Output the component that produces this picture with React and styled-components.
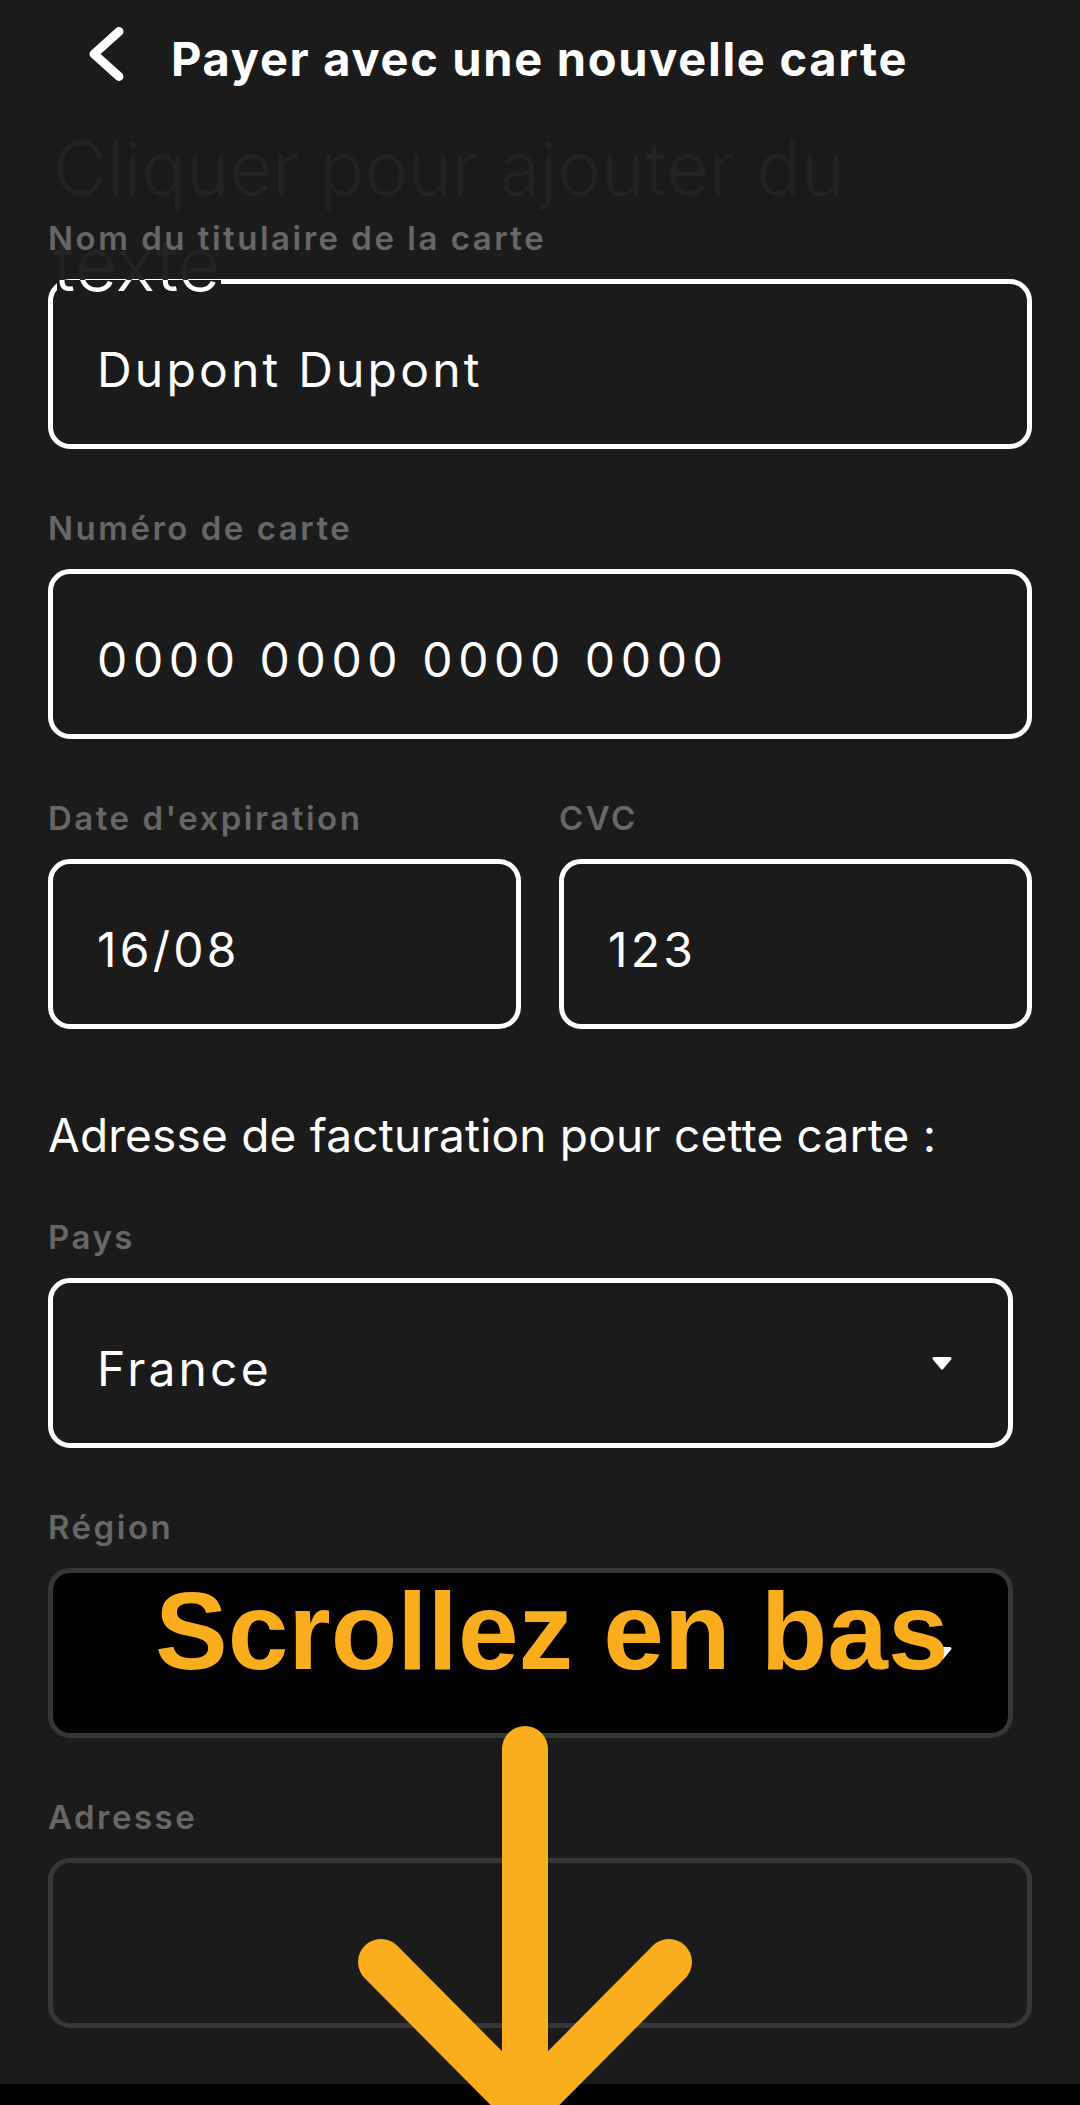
import React from "react";
import styled, { createGlobalStyle } from "styled-components";

const Global = createGlobalStyle`
  html, body { margin: 0; padding: 0; background: #1b1b1b; }
  body { font-family: Inter, "Noto Sans", sans-serif; }
`;

const Screen = styled.div`
  position: relative;
  width: 1080px;
  min-height: 2105px;
  background: #1b1b1b;
  display: flex;
  flex-direction: column;
  overflow: hidden;
  font-family: Inter, "Noto Sans", sans-serif;
  color: #ffffff;
`;

const Header = styled.header`
  height: 118px;
  display: flex;
  align-items: center;
  padding-left: 86px;
  box-sizing: border-box;
`;

const BackButton = styled.button`
  background: none;
  border: 0;
  padding: 0;
  margin: 0 0 11px 0;
  width: 44px;
  height: 60px;
  display: flex;
  cursor: pointer;
`;

const Title = styled.h1`
  margin: 0 0 0 41px;
  font-size: 47px;
  line-height: 56px;
  font-weight: 700;
  color: #ffffff;
  letter-spacing: 1.7px;
`;

const Ghost = styled.div`
  position: absolute;
  top: 120px;
  left: 53px;
  z-index: 1;
  pointer-events: none;
  font-size: 74px;
  line-height: 96px;
  font-weight: 300;
  color: #232323;
  white-space: nowrap;
`;

const GhostLine = styled.div``;

const GhostTail = styled.span`
  position: relative;
  display: inline-block;
  height: 96px;
  color: #232323;
`;

const GhostSlice = styled.span`
  position: absolute;
  left: 4px;
  right: 0;
  top: 64px;
  height: 12px;
  overflow: hidden;
  background: #1b1b1b;
`;

const GhostSliceText = styled.span`
  display: block;
  margin-top: -64px;
  margin-left: -4px;
  line-height: 96px;
  color: #ffffff;
`;

const Form = styled.main`
  margin-top: 101px;
  padding: 0 48px;
  display: flex;
  flex-direction: column;
  gap: 60px;
`;

const Field = styled.div`
  display: flex;
  flex-direction: column;
  gap: 22px;
`;

const Label = styled.label`
  position: relative;
  z-index: 2;
  font-size: 33px;
  line-height: 38px;
  font-weight: 600;
  letter-spacing: 2.5px;
  color: #676767;
`;

const Box = styled.div`
  position: relative;
  height: 170px;
  box-sizing: border-box;
  width: ${(p) => (p.$narrow ? "965px" : "100%")};
  border: 5px solid ${(p) => (p.$muted ? "#363636" : "#ffffff")};
  border-radius: 22px;
  background: ${(p) => (p.$dark ? "#000000" : "#1b1b1b")};
  display: flex;
  align-items: center;
  justify-content: space-between;
  padding: 10px 55px 0 44px;
  font-size: 48px;
  font-weight: 400;
  letter-spacing: ${(p) => (p.$digits ? "5.6px" : "3.2px")};
  color: #ffffff;
`;

const Caret = styled.svg`
  width: 22px;
  height: 14px;
  margin-top: -10px;
  flex: none;
`;

const Row = styled.div`
  display: grid;
  grid-template-columns: 1fr 1fr;
  gap: 38px;
`;

const Heading = styled.h2`
  margin: 18px 0 -5px;
  font-size: 46px;
  line-height: 56px;
  font-weight: 400;
  letter-spacing: 0.2px;
  color: #ffffff;
`;

const BottomBar = styled.div`
  margin-top: auto;
  height: 21px;
  background: #000000;
`;

const Callout = styled.div`
  position: absolute;
  top: 1577px;
  left: 155px;
  z-index: 3;
  font-family: "Liberation Sans", Arial, sans-serif;
  font-weight: 700;
  font-size: 109px;
  line-height: 108px;
  color: #faae1e;
  white-space: nowrap;
`;

const ArrowSvg = styled.svg`
  position: absolute;
  left: 340px;
  top: 1700px;
  width: 370px;
  height: 405px;
  z-index: 3;
  overflow: visible;
`;

function SelectCaret() {
  return (
    <Caret viewBox="0 0 22 14">
      <path
        d="M3 2.5 H19 L11 12 Z"
        fill="#fff"
        stroke="#fff"
        strokeWidth="3"
        strokeLinejoin="round"
      />
    </Caret>
  );
}

export default function App() {
  return (
    <Screen>
      <Global />
      <Header>
        <BackButton aria-label="Retour">
          <svg width="44" height="60" viewBox="0 0 44 60">
            <polyline
              points="33,7.5 8,30 33,52.5"
              fill="none"
              stroke="#fff"
              strokeWidth="9"
              strokeLinecap="round"
              strokeLinejoin="round"
            />
          </svg>
        </BackButton>
        <Title>Payer avec une nouvelle carte</Title>
      </Header>

      <Ghost>
        <GhostLine>Cliquer pour ajouter du</GhostLine>
        <GhostTail>
          texte
          <GhostSlice aria-hidden="true">
            <GhostSliceText>texte</GhostSliceText>
          </GhostSlice>
        </GhostTail>
      </Ghost>

      <Form>
        <Field>
          <Label>Nom du titulaire de la carte</Label>
          <Box>Dupont Dupont</Box>
        </Field>
        <Field>
          <Label>Numéro de carte</Label>
          <Box $digits>0000 0000 0000 0000</Box>
        </Field>
        <Row>
          <Field>
            <Label>Date d'expiration</Label>
            <Box>16/08</Box>
          </Field>
          <Field>
            <Label>CVC</Label>
            <Box>123</Box>
          </Field>
        </Row>

        <Heading>Adresse de facturation pour cette carte :</Heading>

        <Field>
          <Label>Pays</Label>
          <Box $narrow>
            <span>France</span>
            <SelectCaret />
          </Box>
        </Field>
        <Field>
          <Label>Région</Label>
          <Box $narrow $muted $dark>
            <span />
            <SelectCaret />
          </Box>
        </Field>
        <Field>
          <Label>Adresse</Label>
          <Box $muted />
        </Field>
      </Form>

      <BottomBar />

      <Callout>Scrollez en bas</Callout>
      <ArrowSvg viewBox="0 0 370 405">
        <line
          x1="185"
          y1="49"
          x2="185"
          y2="420"
          stroke="#faae1e"
          strokeWidth="46"
          strokeLinecap="round"
        />
        <polyline
          points="41,262 185,407 329,262"
          fill="none"
          stroke="#faae1e"
          strokeWidth="46"
          strokeLinecap="round"
          strokeLinejoin="round"
        />
      </ArrowSvg>
    </Screen>
  );
}
